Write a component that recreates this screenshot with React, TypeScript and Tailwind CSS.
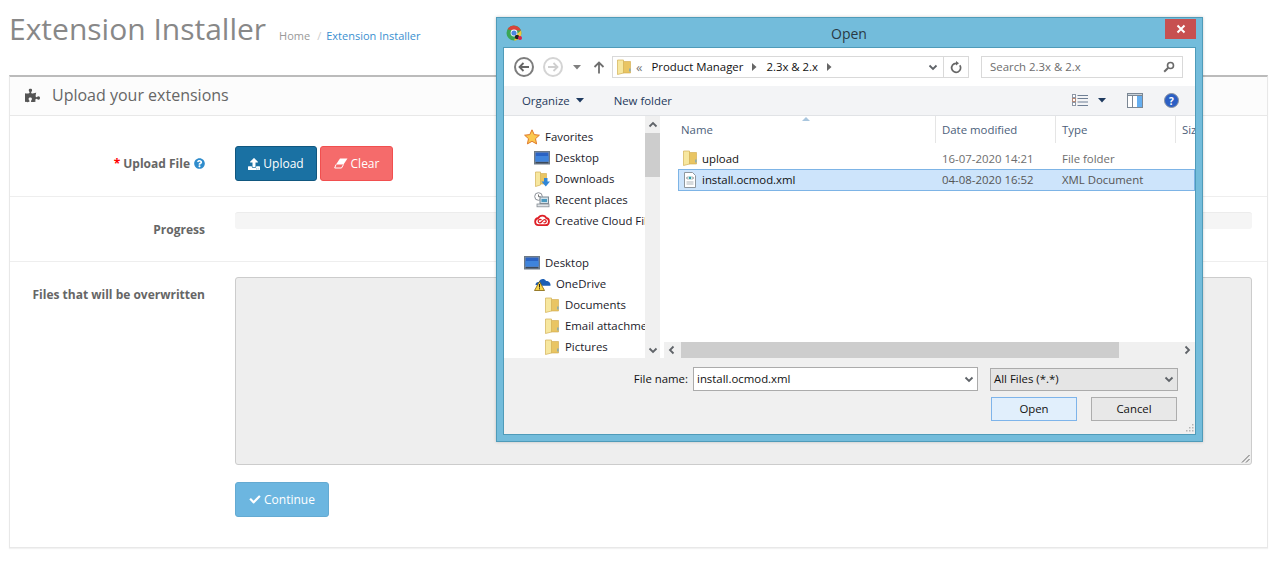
import { FaCheck, FaPuzzlePiece, FaQuestionCircle, FaUpload } from 'react-icons/fa';

function FolderIcon({ size = 16 }: { size?: number }) {
  return (
    <svg width={size} height={size} viewBox="0 0 16 16" className="shrink-0">
      <path d="M7 2.500h7.500v11.500H7z" fill="#e9c563" stroke="#d0a94c" strokeWidth="0.600" />
      <path d="M1.500 1h6v13l-6 1.500z" fill="#f7e79f" stroke="#d2b054" strokeWidth="0.700" />
      <rect x="13.400" y="9.500" width="1" height="3" fill="#5a9fd8" />
    </svg>
  );
}

function DesktopIcon() {
  return (
    <svg width="16" height="14" viewBox="0 0 16 14" className="shrink-0">
      <rect x="0.500" y="0.500" width="15" height="12.500" fill="#8a97a5" stroke="#6c7986" />
      <rect x="1.500" y="1.500" width="13" height="9" fill="#2a63c4" />
      <rect x="1.500" y="5" width="13" height="5.500" fill="#3f84dc" />
      <rect x="1.500" y="11" width="13" height="1.400" fill="#3c4a5a" />
    </svg>
  );
}

function StarIcon() {
  return (
    <svg width="16" height="16" viewBox="0 0 16 16" className="shrink-0">
      <path d="M8 .8l2.200 4.800 5.200.6-3.900 3.500 1.100 5.200L8 12.300l-4.600 2.600 1.100-5.200L.6 6.200l5.200-.6z" fill="#fbc94f" stroke="#e0792a" strokeWidth="1" />
    </svg>
  );
}

function DownloadsIcon() {
  return (
    <svg width="16" height="16" viewBox="0 0 16 16" className="shrink-0">
      <path d="M5 2.500h7.500V13H5z" fill="#e9c563" stroke="#d0a94c" strokeWidth="0.600" />
      <path d="M1.500 1h5v13l-5 1.500z" fill="#f7e79f" stroke="#d2b054" strokeWidth="0.700" />
      <path d="M10 7h3.500v3.500H16L11.800 15.500 7.500 10.500H10z" fill="#2f86d8" />
    </svg>
  );
}

function RecentIcon() {
  return (
    <svg width="16" height="16" viewBox="0 0 16 16" className="shrink-0">
      <circle cx="4.500" cy="4.500" r="3.800" fill="#fff" stroke="#8a8f96" />
      <path d="M4.500 2.500v2.200h2" fill="none" stroke="#555" strokeWidth="0.800" />
      <rect x="6" y="5" width="8.500" height="6.500" fill="#cfe0ea" stroke="#7f8a94" />
      <rect x="7.500" y="7" width="5.500" height="3" fill="#4a9ac0" />
      <rect x="3" y="12" width="12" height="2.800" fill="#dfe3e6" stroke="#868d94" strokeWidth="0.800" />
    </svg>
  );
}

function CreativeCloudIcon() {
  return (
    <svg width="16" height="13" viewBox="0 0 16 13" className="shrink-0">
      <path d="M4.500 11.200C.4 11.200-.2 5 4.300 4 5.800.8 11 .7 12.200 4c4 .7 3.500 7.200-.6 7.200z" fill="#fff" stroke="#de1f26" strokeWidth="1.800" />
      <path d="M7.500 6C6 4.700 4 5.800 4.200 7.500 4.500 9.200 6.500 9.300 8 7.500S10.500 5 11.800 6.300 11.300 9.600 9.500 8.500" fill="none" stroke="#de1f26" strokeWidth="1.300" />
    </svg>
  );
}

function OneDriveIcon() {
  return (
    <svg width="17" height="14" viewBox="0 0 17 14" className="shrink-0">
      <path d="M1.500 8C1.500 5.500 3.500 4.500 4.800 5 6 1.500 10.500 1 12 4c2.800-.3 5 2 4.500 4.800H9z" fill="#1d5fb4" />
      <path d="M5.500 4.500 10.500 13.500H.5z" fill="#f9d548" stroke="#7d5f0c" strokeWidth="0.800" />
      <rect x="5" y="7" width="1" height="3.500" fill="#222" />
      <rect x="5" y="11.300" width="1" height="1" fill="#222" />
    </svg>
  );
}

function XmlIcon() {
  return (
    <svg width="16" height="16" viewBox="0 0 16 16" className="shrink-0">
      <path d="M2.500.5h8l3 3v12h-11z" fill="#fff" stroke="#8f979e" />
      <path d="M6 4.500 4.500 6 6 7.500M10 4.500 11.500 6 10 7.500" stroke="#555" strokeWidth="0.800" fill="none" />
      <circle cx="8" cy="6" r="1.400" fill="#2f9fa8" />
      <path d="M4.500 10h7M4.500 12h7" stroke="#9aa2a8" strokeWidth="0.800" />
    </svg>
  );
}

function ChromeIcon() {
  return (
    <svg width="18" height="18" viewBox="0 0 18 18" className="shrink-0">
      <circle cx="8" cy="8" r="7.500" fill="#3aa655" />
      <path d="M1.500 4.300A7.500 7.500 0 0 1 15 5.500H8z" fill="#d8433a" />
      <path d="M15 5.500A7.500 7.500 0 0 1 8 15.500L11 9z" fill="#f3c53c" />
      <circle cx="8" cy="8" r="3.400" fill="#fff" />
      <circle cx="8" cy="8" r="2.600" fill="#4a86e0" />
      <circle cx="11" cy="12" r="2.200" fill="#222" />
      <circle cx="14" cy="13" r="2" fill="#d8224f" />
    </svg>
  );
}

function EraserIcon() {
  return (
    <svg width="14" height="11" viewBox="0 0 14 11" className="mr-[3px] shrink-0">
      <path d="M6 .5h7.500L9.500 6.500H2z" fill="#fff" />
      <path d="M2 6.500.7 10H7.500L9.500 6.500" fill="none" stroke="#fff" strokeWidth="1" />
    </svg>
  );
}

function Chevron({ dir, color = '#5f6368' }: { dir: 'up' | 'down' | 'left' | 'right'; color?: string }) {
  const paths = {
    up: 'M1.500 6.500 5 3l3.500 3.500',
    down: 'M1.500 3.500 5 7l3.500-3.500',
    left: 'M6.500 1.500 3 5l3.500 3.500',
    right: 'M3.500 1.500 7 5 3.500 8.500',
  };
  return (
    <svg width="10" height="10" viewBox="0 0 10 10" className="shrink-0">
      <path d={paths[dir]} fill="none" stroke={color} strokeWidth="1.800" />
    </svg>
  );
}

function Caret({ color = '#1e3a5f' }: { color?: string }) {
  return (
    <svg width="8" height="5" viewBox="0 0 8 5" className="shrink-0">
      <path d="M0 0h8L4 4.500z" fill={color} />
    </svg>
  );
}

function TreeRow({ icon, label, indent }: { icon: React.ReactNode; label: string; indent: string }) {
  return (
    <div className={`flex h-[21px] items-center whitespace-nowrap ${indent}`}>
      {icon}
      <span className="ml-[5px]">{label}</span>
    </div>
  );
}

function OpenDialog() {
  return (
    <div className="absolute left-[496px] top-[17px] flex h-[425px] w-[707px] flex-col border border-[#4f9bb9] bg-[#73bcdb] text-[11.4px] text-[#111] shadow-[0_0_3px_rgba(0,0,0,0.2)]">
      <div className="flex h-[29px] shrink-0 items-start pl-[9px]">
        <div className="mt-[7px]">
          <ChromeIcon />
        </div>
        <div className="ml-[9px] flex-1 pt-[5px] text-center text-[14px] text-[#2a3a44]">Open</div>
        <div className="mr-[6px] mt-px flex h-[20px] w-[31px] items-center justify-center bg-[#c75050]">
          <svg width="10" height="10" viewBox="0 0 10 10">
            <path d="M1.500 1.500l7 7M8.500 1.500l-7 7" stroke="#fff" strokeWidth="2" />
          </svg>
        </div>
      </div>

      <div className="mx-[6px] flex min-h-0 flex-1 flex-col border border-[#4f9bb9] bg-white">
        <div className="flex h-[38px] shrink-0 items-center pl-[10px]">
          <div className="flex h-[20px] w-[20px] items-center justify-center rounded-full border-2 border-[#7d7d7d]">
            <svg width="12" height="10" viewBox="0 0 12 10">
              <path d="M11 5H2M5.500 1 1.500 5l4 4" fill="none" stroke="#666" strokeWidth="1.800" />
            </svg>
          </div>
          <div className="ml-[9px] flex h-[20px] w-[20px] items-center justify-center rounded-full border-2 border-[#d4d4d4]">
            <svg width="12" height="10" viewBox="0 0 12 10">
              <path d="M1 5h9M6.500 1l4 4-4 4" fill="none" stroke="#cfcfcf" strokeWidth="1.800" />
            </svg>
          </div>
          <div className="ml-[10px]">
            <Caret color="#7f7f7f" />
          </div>
          <svg width="12" height="13" viewBox="0 0 12 13" className="ml-[12px]">
            <path d="M6 12.500V2M1.500 6 6 1.500 10.500 6" fill="none" stroke="#6f6f6f" strokeWidth="1.800" />
          </svg>
          <div className="ml-[7px] flex h-[22px] w-[357px] items-center border border-[#d9d9d9] pl-[3px]">
            <FolderIcon />
            <span className="ml-[4px] text-[13px] leading-none text-[#777]">«</span>
            <span className="ml-[9px]">Product Manager</span>
            <svg width="5" height="8" viewBox="0 0 5 8" className="ml-[9px]">
              <path d="M0 0l4.500 4L0 8z" fill="#666" />
            </svg>
            <span className="ml-[9px]">2.3x &amp; 2.x</span>
            <svg width="5" height="8" viewBox="0 0 5 8" className="ml-[9px]">
              <path d="M0 0l4.500 4L0 8z" fill="#666" />
            </svg>
            <div className="ml-auto flex h-full items-center">
              <Chevron dir="down" />
              <div className="ml-[5px] flex h-full w-[25px] items-center justify-center border-l border-[#d9d9d9]">
                <svg width="12" height="13" viewBox="0 0 12 13">
                  <path d="M9.800 4.200A4.500 4.500 0 1 1 6 2.300" fill="none" stroke="#666" strokeWidth="1.700" />
                  <path d="M6 0v4.600L9 2.300z" fill="#666" />
                </svg>
              </div>
            </div>
          </div>
          <div className="ml-[12px] flex h-[22px] w-[202px] items-center justify-between border border-[#d9d9d9] pl-[8px] pr-[7px] text-[#6d6d6d]">
            <span>Search 2.3x &amp; 2.x</span>
            <svg width="12" height="12" viewBox="0 0 12 12">
              <circle cx="7.500" cy="4.500" r="3" fill="none" stroke="#6a6a6a" strokeWidth="1.600" />
              <path d="M5 7 1.200 10.800" stroke="#6a6a6a" strokeWidth="2" />
            </svg>
          </div>
        </div>

        <div className="flex h-[30px] shrink-0 items-center border-b border-[#e1e3e6] bg-[#f3f4f6] pl-[18px] text-[#1e395b]">
          <span>Organize</span>
          <span className="ml-[6px]">
            <Caret />
          </span>
          <span className="ml-[30px]">New folder</span>
          <div className="ml-auto flex items-center">
            <svg width="16" height="13" viewBox="0 0 16 13">
              <path d="M5.500 1.500H16M5.500 4.500H16M5.500 8H16M5.500 11.500H16" stroke="#6f7f95" />
              <rect x="0.500" y="0.500" width="3" height="3" fill="#fff" stroke="#8d97a6" />
              <rect x="0.500" y="4.500" width="3" height="3" fill="#fff" stroke="#b38a7a" />
              <rect x="0.500" y="8.500" width="3" height="3" fill="#fff" stroke="#8d97a6" />
            </svg>
            <span className="ml-[10px]">
              <Caret />
            </span>
            <svg width="16" height="15" viewBox="0 0 16 15" className="ml-[21px]">
              <rect x="0.500" y="0.500" width="15" height="14" fill="#fff" stroke="#7b8794" />
              <rect x="0.500" y="0.500" width="15" height="2" fill="#c9d2da" stroke="#7b8794" />
              <rect x="10" y="3" width="5" height="11" fill="#65aef0" />
              <path d="M5.500 3v11" stroke="#7b8794" />
            </svg>
            <div className="ml-[21px] mr-[16px] flex h-[15px] w-[15px] items-center justify-center rounded-full border border-[#8a93a0] bg-[#2b5fc4] text-[10px] font-bold leading-none text-white">
              ?
            </div>
          </div>
        </div>

        <div className="flex min-h-0 flex-1">
          <div className="flex w-[156px] shrink-0">
            <div className="w-[141px] overflow-hidden pl-[20px] pt-[10px] text-[#1a1a2a]">
              <TreeRow icon={<StarIcon />} label="Favorites" indent="" />
              <TreeRow icon={<DesktopIcon />} label="Desktop" indent="pl-[10px]" />
              <TreeRow icon={<DownloadsIcon />} label="Downloads" indent="pl-[10px]" />
              <TreeRow icon={<RecentIcon />} label="Recent places" indent="pl-[10px]" />
              <TreeRow icon={<CreativeCloudIcon />} label="Creative Cloud Files" indent="pl-[10px]" />
              <div className="h-[21px]" />
              <TreeRow icon={<DesktopIcon />} label="Desktop" indent="" />
              <TreeRow icon={<OneDriveIcon />} label="OneDrive" indent="pl-[10px]" />
              <TreeRow icon={<FolderIcon />} label="Documents" indent="pl-[20px]" />
              <TreeRow icon={<FolderIcon />} label="Email attachments" indent="pl-[20px]" />
              <TreeRow icon={<FolderIcon />} label="Pictures" indent="pl-[20px]" />
            </div>
            <div className="flex w-[15px] flex-col bg-[#f0f0f0]">
              <div className="flex h-[17px] items-center justify-center">
                <Chevron dir="up" />
              </div>
              <div className="h-[44px] bg-[#cdcdcd]" />
              <div className="mt-auto flex h-[17px] items-center justify-center">
                <Chevron dir="down" />
              </div>
            </div>
          </div>
          <div className="flex min-w-0 flex-1 flex-col pl-[2px]">
            <div className="flex h-[27px] shrink-0 items-center overflow-hidden text-[#4c607a]">
              <div className="relative flex h-full w-[274px] shrink-0 items-center border-r border-[#e5e5e5] pl-[19px]">
                Name
                <svg width="8" height="4" viewBox="0 0 8 4" className="absolute left-[140px] top-[1px]">
                  <path d="M4 0l4 4H0z" fill="#a9c6de" />
                </svg>
              </div>
              <div className="flex h-full w-[120px] shrink-0 items-center border-r border-[#e5e5e5] pl-[6px]">Date modified</div>
              <div className="flex h-full w-[120px] shrink-0 items-center border-r border-[#e5e5e5] pl-[6px]">Type</div>
              <div className="flex h-full shrink-0 items-center pl-[6px]">Siz</div>
            </div>
            <div className="mt-[5px] min-h-0 flex-1">
              <div className="ml-[16px] flex h-[21px] items-center">
                <div className="flex w-[259px] items-center pl-[4px]">
                  <FolderIcon />
                  <span className="ml-[4px]">upload</span>
                </div>
                <span className="w-[120px] pl-[5px] text-[#6d6d6d]">16-07-2020 14:21</span>
                <span className="pl-[5px] text-[#6d6d6d]">File folder</span>
              </div>
              <div className="ml-[16px] flex h-[22px] items-center border border-[#7db4e6] bg-[#cde4fb]">
                <div className="flex w-[258px] items-center pl-[3px]">
                  <XmlIcon />
                  <span className="ml-[4px]">install.ocmod.xml</span>
                </div>
                <span className="w-[120px] pl-[5px] text-[#555]">04-08-2020 16:52</span>
                <span className="pl-[5px] text-[#555]">XML Document</span>
              </div>
            </div>
            <div className="ml-[2px] flex h-[16px] shrink-0 items-center bg-[#f0f0f0] pl-[3px]">
              <Chevron dir="left" />
              <div className="ml-[4px] h-full w-[438px] bg-[#cdcdcd]" />
              <div className="ml-auto mr-[3px]">
                <Chevron dir="right" />
              </div>
            </div>
          </div>
        </div>

        <div className="relative flex h-[76px] shrink-0 flex-col bg-[#f0f0f0] pr-[17px] pt-[9px]">
          <div className="flex items-center justify-end">
            <span className="mr-[5px]">File name:</span>
            <div className="flex h-[24px] w-[285px] items-center justify-between border border-[#ababab] bg-white px-[3px]">
              <span>install.ocmod.xml</span>
              <Chevron dir="down" />
            </div>
            <div className="ml-[12px] flex h-[23px] w-[188px] items-center justify-between border border-[#ababab] bg-[#e5e5e5] px-[3px]">
              <span>All Files (*.*)</span>
              <Chevron dir="down" />
            </div>
          </div>
          <div className="mr-px mt-[6px] flex justify-end">
            <button className="h-[24px] w-[86px] border border-[#7eb4ea] bg-[#e1effc]">Open</button>
            <button className="ml-[14px] h-[24px] w-[86px] border border-[#adadad] bg-[#e8e8e8]">Cancel</button>
          </div>
          <svg width="10" height="10" viewBox="0 0 10 10" className="absolute bottom-[1px] right-[1px]">
            <path d="M8 1h1.500v1.500H8zM5 4h1.500v1.500H5zM8 4h1.500v1.500H8zM2 7h1.500v1.500H2zM5 7h1.500v1.500H5zM8 7h1.500v1.500H8z" fill="#b5b5b5" />
          </svg>
        </div>
      </div>
      <div className="h-[6px] shrink-0" />
    </div>
  );
}

function FormRow({ label, children, className }: { label: React.ReactNode; children: React.ReactNode; className: string }) {
  return (
    <div className={`flex ${className}`}>
      <div className="w-[195px] shrink-0 text-right text-[12px] font-bold text-[#666]">{label}</div>
      <div className="ml-[30px] min-w-0 flex-1">{children}</div>
    </div>
  );
}

export default function App() {
  return (
    <div className="relative h-[585px] w-[1279px] overflow-hidden bg-white font-['Open_Sans',sans-serif]">
      <header className="flex h-[75px] items-start pl-[9px] pt-[8px]">
        <h1 className="text-[30px] leading-[41px] text-[#888]">Extension Installer</h1>
        <div className="ml-[13px] mt-[13px] flex text-[11px] leading-[30px]">
          <span className="text-[#999]">Home</span>
          <span className="ml-[7px] text-[#ccc]">/</span>
          <span className="ml-[5px] text-[#3a8fd0]">Extension Installer</span>
        </div>
      </header>

      <section className="ml-[9px] flex h-[473px] w-[1259px] flex-col border border-t-2 border-[#e8e8e8] border-t-[#bbb] shadow-[0_1px_1px_rgba(0,0,0,0.05)]">
        <div className="flex h-[39px] shrink-0 items-center border-b border-[#e8e8e8] bg-[#fcfcfc] pb-[2px] pl-[15px] text-[16px] text-[#666]">
          <FaPuzzlePiece className="h-[15px] w-[15px] text-[#555]" />
          <span className="ml-[12px]">Upload your extensions</span>
        </div>

        <FormRow
          className="h-[81px] shrink-0 items-center border-b border-[#eee] pt-[15px]"
          label={
            <span className="inline-flex items-center justify-end">
              <span className="mr-[3px] text-[#f00]">*</span>
              Upload File
              <FaQuestionCircle className="ml-[4px] h-[11px] w-[11px] text-[#2f8ccc]" />
            </span>
          }
        >
          <div className="flex">
            <button className="flex h-[35px] w-[82px] items-center justify-center rounded-[3px] border border-[#11577f] bg-[#1a71a3] text-[12px] text-white">
              <FaUpload className="mr-[3px] h-[12px] w-[12px]" />
              Upload
            </button>
            <button className="ml-[3px] flex h-[35px] w-[73px] items-center justify-center rounded-[3px] border border-[#f14f4f] bg-[#f56b6b] text-[12px] text-white">
              <EraserIcon />
              Clear
            </button>
          </div>
        </FormRow>

        <FormRow className="h-[65px] shrink-0 items-center border-b border-[#eee]" label={<span className="relative top-px">Progress</span>}>
          <div className="mb-[17px] mr-[15px] h-[17px] rounded-[3px] border-t border-[#ececec] bg-[#f5f5f5]" />
        </FormRow>

        <FormRow className="min-h-0 flex-1 pt-[24px]" label="Files that will be overwritten">
          <div className="mr-[15px] mt-[-9px]">
            <div className="relative h-[188px] rounded-[3px] border border-[#ccc] bg-[#eee]">
              <svg width="9" height="9" viewBox="0 0 9 9" className="absolute bottom-[1px] right-[1px]">
                <path d="M8.500 1 1 8.500M8.500 5 5 8.500" stroke="#555" strokeWidth="0.900" />
              </svg>
            </div>
            <button className="mt-[17px] flex h-[35px] w-[94px] items-center justify-center rounded-[3px] border border-[#64aad2] bg-[#6cb6e0] text-[12px] text-white">
              <FaCheck className="mr-[3px] h-[11px] w-[12px]" />
              Continue
            </button>
          </div>
        </FormRow>
      </section>

      <OpenDialog />
    </div>
  );
}
